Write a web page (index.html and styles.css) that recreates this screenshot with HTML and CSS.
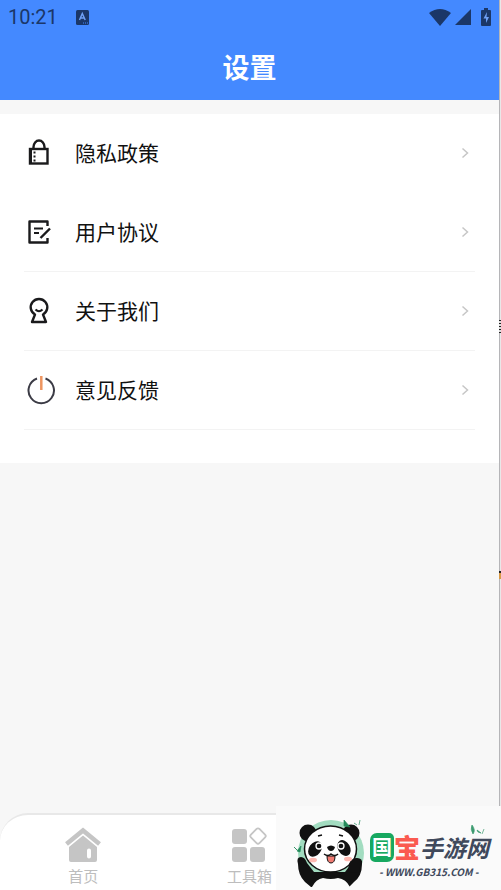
FILE: index.html
```html
<!DOCTYPE html>
<html lang="zh-CN">
<head>
    <meta charset="UTF-8">
    <meta name="viewport" content="width=device-width, initial-scale=1.0">
    <title>设置</title>
    <link rel="stylesheet" href="styles.css">
</head>
<body>
    <div class="screen">
        <header class="header">
            <div class="status-bar">
                <span class="time">10:21</span>
                <svg class="status-app" width="13" height="15" viewBox="0 0 13 15">
                    <rect width="13" height="15" rx="1.5" fill="#1b3768"/>
                    <path d="M3.5 10 6.3 3.500 9.200 10M4.500 8h3.700" fill="none" stroke="#6fa0f5" stroke-width="1.500"/>
                    <path d="M7 13h5" stroke="#4489ff" stroke-dasharray="1 1"/>
                </svg>
                <div class="status-icons">
                    <svg width="22" height="17" viewBox="0 0 22 17">
                        <path d="M0 4Q11-4 22 4L11 17z" fill="#1b3768"/>
                    </svg>
                    <svg width="16" height="16" viewBox="0 0 16 16">
                        <path d="M16 0v16H0z" fill="#1b3768"/>
                    </svg>
                    <svg class="battery" width="10" height="18" viewBox="0 0 10 18">
                        <path d="M3 0h4v2h2q1 0 1 1v14q0 1-1 1H1q-1 0-1-1V3q0-1 1-1h2z" fill="#1b3768"/>
                        <path d="M6 4 2.500 10.500H5V15l3-6H5.500z" fill="#6fa0f5"/>
                    </svg>
                </div>
            </div>
            <h1>设置</h1>
        </header>

        <main class="settings">
            <a class="row" href="#">
                <svg class="row-icon" width="30" height="30" viewBox="0 0 30 30" fill="none" stroke="#1a1a1c" stroke-width="2.4">
                    <rect x="3" y="11" width="17.500" height="14.500"/>
                    <path d="M6.500 11V9a5.500 6.500 0 0 1 11 0v2"/>
                    <path d="M3.500 10v16" stroke-width="3"/>
                    <path d="M7.500 13.500v10" stroke-width="2" stroke-dasharray="2 2"/>
                </svg>
                <span class="label">隐私政策</span>
                <svg class="arrow" width="8" height="12" viewBox="0 0 8 12"><path d="m1.500 1.500 5 4.500-5 4.500"/></svg>
            </a>
            <a class="row divided" href="#">
                <svg class="row-icon" width="30" height="30" viewBox="0 0 30 30" fill="none" stroke="#1a1a1c" stroke-width="2.4">
                    <path d="M20.500 9V4.500H2.500v21h18V21" stroke-linejoin="round"/>
                    <path d="M7 11.500h9M7 16h5" stroke-width="2"/>
                    <path d="m13.500 21 9.500-9.500"/>
                </svg>
                <span class="label">用户协议</span>
                <svg class="arrow" width="8" height="12" viewBox="0 0 8 12"><path d="m1.500 1.500 5 4.500-5 4.500"/></svg>
            </a>
            <a class="row divided" href="#">
                <svg class="row-icon" width="30" height="30" viewBox="0 0 30 30" fill="none" stroke="#1a1a1c" stroke-width="2.4">
                    <path d="M8 18.500a8.300 8.300 0 1 1 8 0l3 7.500H5z" stroke-linejoin="round"/>
                    <path d="M8.500 13.500q3.500 3.500 7 0" stroke-width="2"/>
                </svg>
                <span class="label">关于我们</span>
                <svg class="arrow" width="8" height="12" viewBox="0 0 8 12"><path d="m1.500 1.500 5 4.500-5 4.500"/></svg>
            </a>
            <a class="row divided" href="#">
                <svg class="row-icon" width="30" height="30" viewBox="0 0 30 30" fill="none" stroke="#3b3b45" stroke-width="2">
                    <path d="M18.500 3.500a12.700 12.700 0 1 1-8.500 0"/>
                    <path d="M14.300 1v14" stroke="#ee9560" stroke-width="2.500"/>
                </svg>
                <span class="label">意见反馈</span>
                <svg class="arrow" width="8" height="12" viewBox="0 0 8 12"><path d="m1.500 1.500 5 4.500-5 4.500"/></svg>
            </a>
        </main>

        <nav class="tab-bar">
            <a class="tab" href="#">
                <svg width="36" height="36" viewBox="0 0 36 36">
                    <path d="M1.500 17 18 3.500 34.500 17" fill="none" stroke="#c5c5c5" stroke-width="4.500"/>
                    <path fill-rule="evenodd" d="M18 8.500 32 20v13q0 2-2 2H6q-2 0-2-2V20zM24 21.500q-2 0-2 2v6q0 2 2 2t2-2v-6q0-2-2-2z" fill="#c5c5c5"/>
                </svg>
                <span>首页</span>
            </a>
            <a class="tab" href="#">
                <svg width="36" height="36" viewBox="0 0 36 36" fill="#c5c5c5">
                    <rect x="1" y="2" width="15" height="15" rx="3"/>
                    <rect x="1" y="20" width="15" height="15" rx="3"/>
                    <rect x="19" y="20" width="15" height="15" rx="3"/>
                    <rect x="21" y="3" width="12" height="12" rx="2" transform="rotate(45 27 9)" fill="none" stroke="#c5c5c5" stroke-width="1.800"/>
                </svg>
                <span>工具箱</span>
            </a>
        </nav>
    </div>
    <div class="edge"></div>

    <div class="brand">
        <svg class="panda" width="76" height="68" viewBox="0 0 76 68">
            <circle cx="37" cy="34" r="33" fill="#a2dcc0"/>
            <g fill="#111">
                <circle cx="14" cy="14" r="8.500"/>
                <circle cx="57" cy="14" r="8.500"/>
                <path d="M4 45q-2-7 3-7 4 0 6 6l7 9h31l6-8q1-6 6-6 6 0 5 6 0 12-8 18l-5 5H17l-6-5Q4 56 4 45z"/>
            </g>
            <path d="M18 68q4-8 11-9 8 2 15 0 8 1 12 9z" fill="#fafafa"/>
            <ellipse cx="36.500" cy="30" rx="26" ry="23" fill="#fff" stroke="#111" stroke-width="1.500"/>
            <path d="M55 53q-2-10 4-13 5-2 8 2l-2 12z" fill="#111"/>
            <g fill="#111">
                <ellipse cx="21" cy="30" rx="6" ry="8.500" transform="rotate(35 21 30)"/>
                <ellipse cx="50" cy="29" rx="6" ry="8.500" transform="rotate(-30 50 29)"/>
                <path d="M33 28q4-3 8 0-1 4-4 4t-4-4z"/>
            </g>
            <g fill="#111" stroke="#fff" stroke-width="1.300">
                <circle cx="25" cy="27" r="3"/>
                <circle cx="47" cy="27" r="3"/>
            </g>
            <path d="m24 17 4-1m17 0 4 1M30 35q4 3 7 0 4 3 7 0" fill="none" stroke="#111" stroke-width="1.500"/>
            <path d="M33 37h8q0 7-4 7t-4-7z" fill="#f17b72" stroke="#111"/>
            <ellipse cx="19" cy="41" rx="4" ry="2.300" fill="#ffb9b1"/>
            <ellipse cx="54" cy="40" rx="4" ry="2.300" fill="#ffb9b1"/>
            <path d="m50 1 6 7-6-1zM3 32l4-5-1 6zM0 28l3 3zM60 4l3 2m3-5-1 5" fill="#238a5a" stroke="#238a5a" stroke-width=".7"/>
        </svg>
        <div class="brand-text">
            <div class="brand-name">
                <span class="green">国</span>
                <span class="red">宝</span>
                <span>手游网</span>
            </div>
            <div class="brand-url">- WWW.GB315.COM -</div>
        </div>
        <svg class="leaves" width="16" height="12" viewBox="0 0 16 12">
            <path d="M3 1q4 5 1 9Q1 5 3 1zM8 6l4 3-3-1zM15 5l-2 5" fill="#3c9b70" stroke="#3c9b70" stroke-width=".7"/>
        </svg>
    </div>
</body>
</html>
```

FILE: styles.css
```css
* {
    box-sizing: border-box;
    margin: 0;
    padding: 0;
}

body {
    display: flex;
    min-height: 100vh;
    background-color: #f7f7f7;
    font-family: "Noto Sans CJK SC", sans-serif;
}

a {
    color: inherit;
    text-decoration: none;
}

svg {
    display: block;
    flex-shrink: 0;
}

.screen {
    flex: 1;
    display: flex;
    flex-direction: column;
}

/* strip of the window behind the phone */
.edge {
    width: 2px;
    background:
        repeating-linear-gradient(#222 0 1px, #ddd 1px 3px) 0 320px / 2px 13px no-repeat,
        linear-gradient(#222 2px, #d99a45 2px) 0 571px / 2px 8px no-repeat,
        linear-gradient(90deg, #b5b5b8 1px, #e8e8e8 1px);
}

.header {
    height: 100px;
    background-color: #4489ff;
    color: #fff;
}

.status-bar {
    display: flex;
    align-items: center;
    height: 34px;
    padding: 0 8px;
    color: #1b3768;
}

.time {
    font-family: Roboto, sans-serif;
    font-size: 20px;
    font-weight: 400;
    line-height: 34px;
}

.status-app {
    margin-left: 18px;
}

.status-icons {
    display: flex;
    align-items: center;
    gap: 4px;
    margin-left: auto;
}

.battery {
    margin-left: 6px;
}

h1 {
    font-size: 27px;
    font-weight: 700;
    line-height: 66px;
    text-align: center;
}

.settings {
    margin-top: 14px;
    padding: 0 24px 33px;
    background-color: #fff;
}

.row {
    display: flex;
    align-items: center;
    height: 79px;
    padding: 0 6px 0 3px;
    border-bottom: 1px solid transparent;
}

.divided {
    border-bottom-color: #f3f3f3;
}

.label {
    flex: 1;
    margin-left: 18px;
    padding-bottom: 2px;
    color: #111;
    font-size: 21px;
    line-height: 30px;
}

.arrow {
    fill: none;
    stroke: #c6c6c6;
    stroke-width: 1.5px;
}

.tab-bar {
    display: grid;
    grid-template-columns: repeat(3, 1fr);
    height: 77px;
    margin-top: auto;
    background-color: #fff;
    border-top: 2px solid #e8e8e8;
    border-radius: 28px 28px 0 0;
}

.tab {
    display: flex;
    flex-direction: column;
    align-items: center;
    padding-top: 12px;
    color: #bdbdbd;
    font-size: 15px;
    line-height: 26px;
}

.brand {
    position: fixed;
    right: 0;
    bottom: 0;
    display: flex;
    width: 225px;
    height: 84px;
    padding: 13px 0 0 18px;
    background-color: #fafafa;
}

.brand-text {
    color: #40495c;
}

.brand-name {
    display: flex;
    align-items: center;
    margin-top: 11px;
    font-size: 23px;
    font-style: italic;
    font-weight: 700;
    line-height: 34px;
}

.green {
    width: 24px;
    height: 29px;
    border-radius: 7px 5px;
    background-color: #17a860;
    color: #fff;
    font-size: 20px;
    font-style: normal;
    line-height: 27px;
    text-align: center;
}

.red {
    color: #fa5a50;
    font-size: 26px;
    font-style: normal;
    font-weight: 900;
    line-height: 30px;
}

.brand-url {
    padding-left: 9px;
    font-size: 10px;
    font-style: italic;
    font-weight: 700;
    line-height: 15px;
}

.leaves {
    position: absolute;
    top: 18px;
    right: 16px;
}
```
